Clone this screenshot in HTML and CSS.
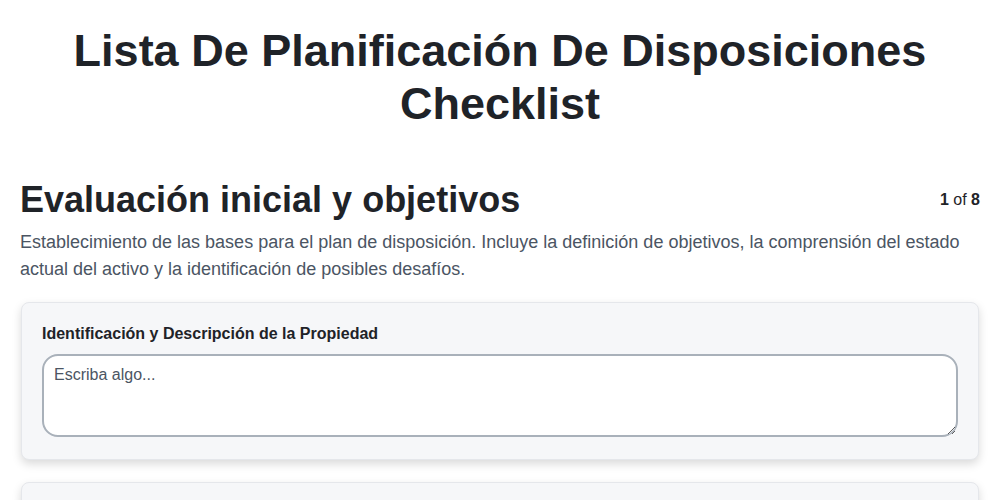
FILE: index.html
```html
<!DOCTYPE html>
<html lang="es">
<head>
    <meta charset="UTF-8">
    <meta name="viewport" content="width=device-width, initial-scale=1.0">
    <title>Lista De Planificación De Disposiciones Checklist</title>
    <link rel="stylesheet" href="styles.css">
</head>
<body>
    <h1 class="page-title">Lista De Planificación De Disposiciones Checklist</h1>
    <div class="section">
        <div class="section-head">
            <h2>Evaluación inicial y objetivos</h2>
            <span class="step"><b>1</b> of <b>8</b></span>
        </div>
        <p class="section-desc">Establecimiento de las bases para el plan de disposición. Incluye la definición de objetivos, la comprensión del estado actual del activo y la identificación de posibles desafíos.</p>
        <div class="card">
            <label for="q1">Identificación y Descripción de la Propiedad</label>
            <textarea id="q1" placeholder="Escriba algo..."></textarea>
        </div>
        <div class="card">
            <label for="q2">Objetivos de la Disposición</label>
            <textarea id="q2" placeholder="Escriba algo..."></textarea>
        </div>
    </div>
</body>
</html>
```

FILE: styles.css
```css
body {
    margin: 0;
    padding: 0 20px;
    font-family: "Liberation Sans", Arial, sans-serif;
    color: #1f2328;
    background-color: #fff;
}
.page-title {
    font-size: 45px;
    line-height: 53px;
    text-align: center;
    margin: 24px 40px 48px;
}
.section-head {
    display: flex;
    justify-content: space-between;
    align-items: center;
}
.section-head h2 {
    font-size: 36px;
    line-height: 44px;
    margin: 0;
}
.step {
    font-size: 16px;
}
.section-desc {
    font-size: 18px;
    line-height: 27px;
    color: #4b5563;
    margin: 7px 0 19px;
}
.card {
    background-color: #f6f7f9;
    border: 1px solid #e5e7eb;
    border-radius: 8px;
    box-shadow: 0 4px 10px rgba(0, 0, 0, 0.15);
    padding: 22px 20px 22px;
    margin: 0 1px 22px;
}
.card label {
    display: block;
    font-weight: bold;
    font-size: 16px;
    margin-bottom: 11px;
}
.card textarea {
    display: block;
    box-sizing: border-box;
    width: 100%;
    height: 83px;
    border: 2px solid #a9b1ba;
    border-radius: 16px;
    padding: 10px 10px;
    font-family: "Liberation Sans", Arial, sans-serif;
    font-size: 16px;
    color: #1f2328;
    background: #fff;
}
.card textarea::placeholder {
    color: #4b5563;
}
```
